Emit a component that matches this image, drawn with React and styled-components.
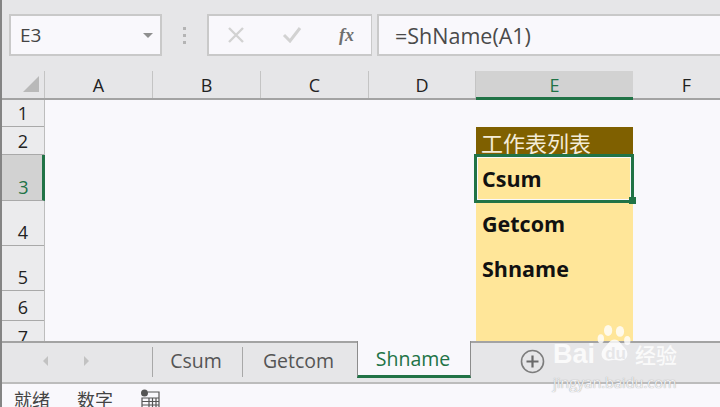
import React from 'react';
import styled, { createGlobalStyle } from 'styled-components';

const headerBG = '#e6e6e8';
const paper = '#f9f8fc';
const excelGreen = '#217346';
const rule = '#a3a3a3';

const GlobalStyle = createGlobalStyle`
  html, body {
    margin: 0;
    padding: 0;
    width: 720px;
    height: 407px;
    overflow: hidden;
    background: ${paper};
  }
  * { box-sizing: border-box; }
`;

const Window = styled.div`
  position: relative;
  display: flex;
  flex-direction: column;
  width: 720px;
  height: 407px;
  overflow: hidden;
  border-left: 2px solid #848484;
  font-family: "Open Sans", "Noto Sans CJK SC", sans-serif;
  color: #222;
`;

const FormulaRow = styled.div`
  display: flex;
  align-items: stretch;
  height: 71px;
  padding: 14px 0 15px 7px;
  background: ${headerBG};
`;

const Field = styled.div`
  display: flex;
  align-items: center;
  border: 2px solid #c9c9c9;
  background: ${paper};
`;

const NameBox = styled(Field)`
  justify-content: space-between;
  width: 153px;
  padding: 0 7px 0 9px;
  font-size: 19px;
  color: #444;
`;

const Caret = styled.span`
  width: 0;
  height: 0;
  border-left: 5px solid transparent;
  border-right: 5px solid transparent;
  border-top: 5px solid #8f8f8f;
`;

const Grip = styled.div`
  display: flex;
  flex-direction: column;
  justify-content: center;
  gap: 4px;
  width: 45px;
  align-items: center;
`;

const GripDot = styled.span`
  width: 3px;
  height: 3px;
  background: #b4b4b4;
`;

const ActionBox = styled(Field)`
  width: 165px;
  justify-content: space-between;
  padding: 0 17px 0 18px;
  border-right-width: 1px;
`;

const FormulaBox = styled(Field)`
  flex: 1;
  margin-left: 5px;
  border-right: none;
  padding-left: 16px;
  font-size: 21.5px;
  color: #4a4a4a;
`;

const FxLabel = styled.span`
  font-family: "Liberation Serif", serif;
  font-style: italic;
  font-weight: 700;
  font-size: 18px;
  color: #6f6f6f;
`;

const ColumnRow = styled.div`
  display: flex;
  height: 29px;
  background: ${headerBG};
  border-bottom: 2px solid ${rule};
`;

const Corner = styled.div`
  display: flex;
  justify-content: flex-end;
  align-items: flex-end;
  flex: none;
  width: 43px;
  padding: 0 5px 6px 0;
  border-right: 1px solid #c4c4c4;
`;

const CornerMark = styled.span`
  width: 0;
  height: 0;
  border-left: 16px solid transparent;
  border-bottom: 16px solid #b9b9b9;
`;

const ColumnHead = styled.div`
  flex: none;
  width: ${p => p.$width}px;
  display: flex;
  align-items: center;
  justify-content: center;
  font-size: 18px;
  padding-top: 1px;
  border-right: 1px solid ${p => (p.$last ? 'transparent' : '#c4c4c4')};
  ${p => p.$active && `
    height: 29px;
    background: #d2d2d2;
    border-right: none;
    border-bottom: 3px solid ${excelGreen};
    color: ${excelGreen};
  `}
`;

const SheetBody = styled.div`
  display: flex;
  height: 241px;
  overflow: hidden;
  background: ${paper};
`;

const RowHeads = styled.div`
  width: 43px;
  flex: none;
  background: #ebebed;
  border-right: 1px solid #bdbdbd;
`;

const RowHead = styled.div`
  display: flex;
  align-items: flex-end;
  justify-content: center;
  height: ${p => p.$height}px;
  font-size: 18px;
  line-height: 25px;
  border-bottom: 1px solid #a9a9a9;
  ${p => p.$active && `
    background: #d2d2d2;
    color: ${excelGreen};
    border-right: 3px solid ${excelGreen};
    margin-right: -1px;
    padding-left: 3px;
  `}
`;

const ListWrap = styled.div`
  margin-left: 431px;
  flex: none;
  width: 157px;
  display: flex;
  flex-direction: column;
`;

const ListBlank = styled.div`
  flex: none;
  height: 27px;
  background: ${paper};
`;

const ListTitle = styled.div`
  flex: none;
  height: 28px;
  padding-left: 5px;
  background: #7f6000;
  color: #f4ecd8;
  font-size: 22px;
  line-height: 32px;
  white-space: nowrap;
  overflow: hidden;
`;

const ListCell = styled.div`
  position: relative;
  flex: none;
  height: ${p => p.$height}px;
  padding-left: 6px;
  background: #ffe699;
  color: #111;
  font-size: 21.5px;
  font-weight: 700;
  line-height: ${p => (p.$selected ? 47 : 45)}px;
`;

const Selection = styled.div`
  position: absolute;
  z-index: 2;
  left: -2px;
  right: -1px;
  top: -1px;
  bottom: -2px;
  border: 3px solid ${excelGreen};
  box-shadow: inset 0 0 0 1px ${paper};
`;

const FillHandle = styled.span`
  position: absolute;
  z-index: 3;
  right: -3px;
  bottom: -3px;
  width: 7px;
  height: 7px;
  background: ${excelGreen};
`;

const TabBar = styled.div`
  display: flex;
  height: 43px;
  background: ${headerBG};
  border-top: 2px solid ${rule};
  border-bottom: 2px solid #bcbcbc;
`;

const Arrows = styled.div`
  display: flex;
  align-items: center;
  gap: 36px;
  width: 150px;
  padding: 0 0 3px 41px;
`;

const Arrow = styled.span`
  width: 0;
  height: 0;
  border-top: 5px solid transparent;
  border-bottom: 5px solid transparent;
  ${p => (p.$left ? 'border-right' : 'border-left')}: 5px solid #c2c2c2;
`;

const Tab = styled.div`
  display: flex;
  align-items: center;
  justify-content: center;
  width: ${p => p.$width}px;
  height: 30px;
  margin-top: 4px;
  padding: 0 3px 3px 0;
  font-size: 19.5px;
  color: #555;
  border-left: 1px solid #a8a8a8;
`;

const ActiveTab = styled.div`
  display: flex;
  align-items: center;
  justify-content: center;
  width: 114px;
  height: 37px;
  margin-top: -2px;
  padding-right: 2px;
  font-size: 19.5px;
  color: ${excelGreen};
  background: ${paper};
  border-left: 1px solid #8c8c8c;
  border-right: 1px solid #8c8c8c;
  border-bottom: 3px solid ${excelGreen};
`;

const AddSheet = styled.div`
  display: flex;
  align-items: center;
  margin-left: 49px;
  padding-bottom: 3px;
`;

const StatusBar = styled.div`
  display: flex;
  align-items: center;
  gap: 27px;
  height: 23px;
  padding: 6px 0 0 12px;
  background: ${paper};
  font-size: 18px;
  color: #444;
  white-space: nowrap;
`;

const Watermark = styled.div`
  position: absolute;
  left: 551px;
  top: 329px;
  width: 132px;
  color: rgba(255, 255, 255, 0.82);
  pointer-events: none;
`;

const WatermarkLogo = styled.div`
  display: flex;
  align-items: center;
  font-family: "Liberation Sans", sans-serif;
  font-size: 27px;
  font-weight: 700;
  height: 42px;
  padding-top: 8px;
  white-space: nowrap;
`;

const PawText = styled.span`
  position: relative;
  display: inline-flex;
  justify-content: center;
  width: 37px;
  margin: 0 1px 0 2px;
  color: ${headerBG};
  font-size: 17px;
  z-index: 1;
`;

const Paw = styled.svg`
  position: absolute;
  left: -1px;
  top: -19px;
  z-index: -1;
`;

const JingYan = styled.span`
  font-family: "Noto Sans CJK SC", sans-serif;
  font-size: 21px;
  font-weight: 500;
`;

const WatermarkUrl = styled.div`
  margin-top: 4px;
  font-family: "Open Sans", sans-serif;
  font-size: 14.5px;
  line-height: 16px;
  white-space: nowrap;
  color: #f1f1f3;
  text-shadow: 0 0 1px rgba(130, 130, 130, 0.9);
`;

const COLUMNS = [
  { label: 'A', width: 108 },
  { label: 'B', width: 108 },
  { label: 'C', width: 108 },
  { label: 'D', width: 107 },
  { label: 'E', width: 157, active: true },
  { label: 'F', width: 108, last: true }
];

const ROWS = [
  { label: '1', height: 27 },
  { label: '2', height: 28 },
  { label: '3', height: 46, active: true },
  { label: '4', height: 45 },
  { label: '5', height: 45 },
  { label: '6', height: 30 },
  { label: '7', height: 30 }
];

const CrossIcon = () => (
  <svg width="18" height="16" viewBox="0 0 18 16">
    <path d="M2 1l14 14M16 1L2 15" stroke="#d2d2d2" strokeWidth="2.4" fill="none" />
  </svg>
);

const CheckIcon = () => (
  <svg width="20" height="16" viewBox="0 0 20 16">
    <path d="M2 8l6 6L18 1" stroke="#d2d2d2" strokeWidth="3" fill="none" />
  </svg>
);

const PlusCircle = () => (
  <svg width="25" height="25" viewBox="0 0 25 25">
    <circle cx="12.5" cy="12.5" r="11" stroke="#7d7d7d" strokeWidth="1.6" fill="none" />
    <path d="M6.5 12.5h12M12.5 6.5v12" stroke="#6a6a6a" strokeWidth="2.2" />
  </svg>
);

const SheetViewIcon = () => (
  <svg width="20" height="20" viewBox="0 0 20 20">
    <circle cx="4.5" cy="4" r="3.5" fill="#555" />
    <path d="M8 3h11v17H2V9h17M9 9v11M12.5 9v11M16 9v11M2 12.5h17M2 16h17" stroke="#555" strokeWidth="1.2" fill="none" />
  </svg>
);

const App = () => (
  <Window>
    <GlobalStyle />
    <FormulaRow>
      <NameBox>
        E3
        <Caret />
      </NameBox>
      <Grip>
        <GripDot />
        <GripDot />
        <GripDot />
      </Grip>
      <ActionBox>
        <CrossIcon />
        <CheckIcon />
        <FxLabel>fx</FxLabel>
      </ActionBox>
      <FormulaBox>=ShName(A1)</FormulaBox>
    </FormulaRow>

    <ColumnRow>
      <Corner>
        <CornerMark />
      </Corner>
      {COLUMNS.map(col => (
        <ColumnHead key={col.label} $width={col.width} $active={col.active} $last={col.last}>
          {col.label}
        </ColumnHead>
      ))}
    </ColumnRow>

    <SheetBody>
      <RowHeads>
        {ROWS.map(row => (
          <RowHead key={row.label} $height={row.height} $active={row.active}>
            {row.label}
          </RowHead>
        ))}
      </RowHeads>
      <ListWrap>
        <ListBlank />
        <ListTitle>工作表列表</ListTitle>
        <ListCell $height={46} $selected>
          Csum
          <Selection />
          <FillHandle />
        </ListCell>
        <ListCell $height={45}>Getcom</ListCell>
        <ListCell $height={45}>Shname</ListCell>
        <ListCell $height={60} />
      </ListWrap>
    </SheetBody>

    <TabBar>
      <Arrows>
        <Arrow $left />
        <Arrow />
      </Arrows>
      <Tab $width={90}>Csum</Tab>
      <Tab $width={115}>Getcom</Tab>
      <ActiveTab>Shname</ActiveTab>
      <AddSheet>
        <PlusCircle />
      </AddSheet>
    </TabBar>

    <StatusBar>
      <span>就绪</span>
      <span>数字</span>
      <SheetViewIcon />
    </StatusBar>

    <Watermark>
      <WatermarkLogo>
        Bai
        <PawText>
          <Paw width="37" height="42" viewBox="0 0 38 46">
            <ellipse cx="12" cy="6" rx="4.5" ry="6" fill="rgba(255,255,255,0.8)" />
            <ellipse cx="25" cy="7" rx="4.5" ry="6" fill="rgba(255,255,255,0.8)" />
            <ellipse cx="4" cy="15" rx="3.5" ry="5" fill="rgba(255,255,255,0.8)" />
            <ellipse cx="33" cy="17" rx="3.5" ry="5" fill="rgba(255,255,255,0.8)" />
            <path d="M19 16c5 0 7 5 11 9 5 5 4 13-3 14-3 .4-5-1-8-1s-5 1.4-8 1C4 38 3 30 8 25c4-4 6-9 11-9z" fill="rgba(255,255,255,0.8)" />
          </Paw>
          du
        </PawText>
        <JingYan>经验</JingYan>
      </WatermarkLogo>
      <WatermarkUrl>jingyan.baidu.com</WatermarkUrl>
    </Watermark>
  </Window>
);

export default App;
